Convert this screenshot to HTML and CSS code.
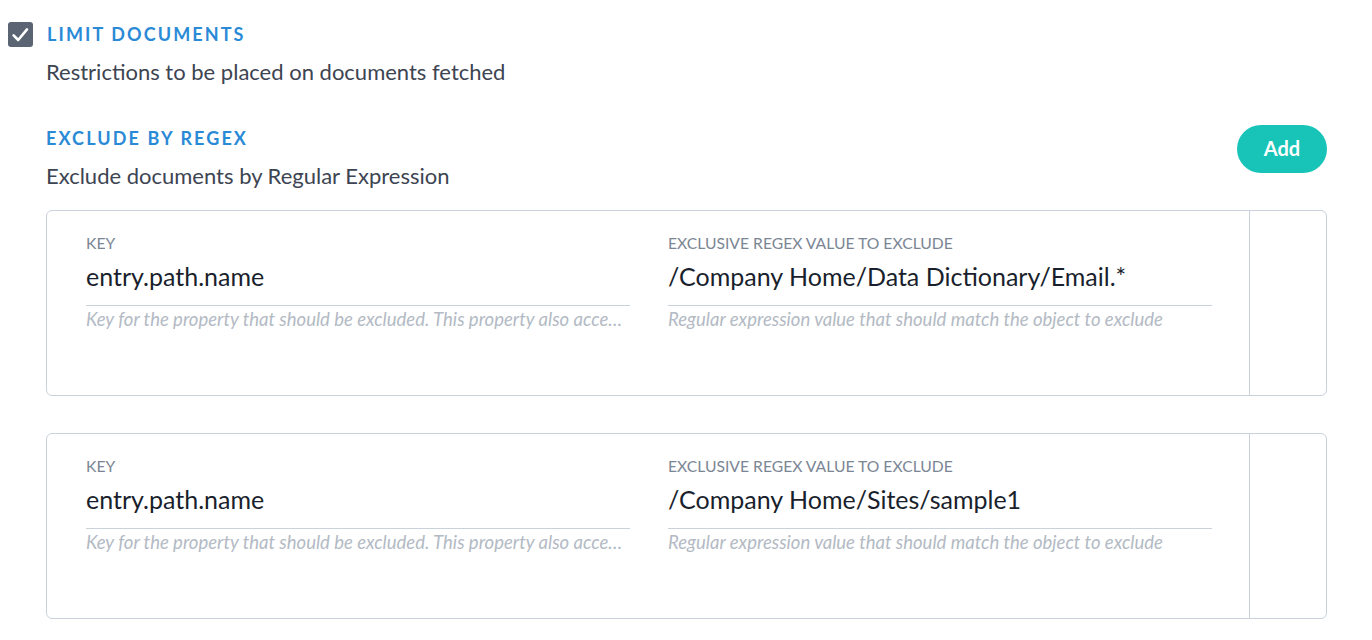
FILE: index.html
```html
<!DOCTYPE html>
<html>
<head>
<meta charset="utf-8">
<link rel="stylesheet" href="styles.css">
</head>
<body>
<div class="page">
  <div class="head">
    <span class="checkbox">
      <svg width="25" height="25" viewBox="0 0 25 25"><path d="M5.6 13.4 L10.2 18 L19 7.4" fill="none" stroke="#fff" stroke-width="2.6" stroke-linecap="round" stroke-linejoin="round"/></svg>
    </span>
    <span class="title">LIMIT DOCUMENTS</span>
  </div>
  <div class="content">
    <p class="desc">Restrictions to be placed on documents fetched</p>
    <div class="subhead">
      <div>
        <div class="title">EXCLUDE BY REGEX</div>
        <p class="desc">Exclude documents by Regular Expression</p>
      </div>
      <button class="add">Add</button>
    </div>
    <div class="card">
      <div class="fields">
        <div class="field">
          <div class="label">KEY</div>
          <div class="value">entry.path.name</div>
          <div class="help">Key for the property that should be excluded. This property also accepts nested properties</div>
        </div>
        <div class="field">
          <div class="label">EXCLUSIVE REGEX VALUE TO EXCLUDE</div>
          <div class="value">/Company Home/Data Dictionary/Email.*</div>
          <div class="help">Regular expression value that should match the object to exclude</div>
        </div>
      </div>
      <div class="side"></div>
    </div>
    <div class="card">
      <div class="fields">
        <div class="field">
          <div class="label">KEY</div>
          <div class="value">entry.path.name</div>
          <div class="help">Key for the property that should be excluded. This property also accepts nested properties</div>
        </div>
        <div class="field">
          <div class="label">EXCLUSIVE REGEX VALUE TO EXCLUDE</div>
          <div class="value">/Company Home/Sites/sample1</div>
          <div class="help">Regular expression value that should match the object to exclude</div>
        </div>
      </div>
      <div class="side"></div>
    </div>
  </div>
</div>
</body>
</html>
```
FILE: styles.css
```css
* { box-sizing: border-box; }
body {
  margin: 0;
  background: #fff;
  font-family: Lato, "Open Sans", sans-serif;
  color: #3d4452;
}
.page {
  padding: 22px 45px 0 8px;
}
.head {
  display: flex;
  align-items: center;
  gap: 14px;
  height: 25px;
}
.checkbox {
  width: 25px;
  height: 25px;
  border-radius: 3px;
  background: #5a6472;
  display: block;
}
.checkbox svg { display: block; }
.title {
  font-size: 18px;
  font-weight: 700;
  letter-spacing: 2.1px;
  color: #2a8ad6;
  line-height: 25px;
}
.content {
  padding-left: 38px;
}
.desc {
  margin: 0;
  font-size: 22px;
  line-height: 28px;
  color: #3d4452;
}
.content > .desc {
  margin-top: 11px;
}
.subhead {
  display: flex;
  justify-content: space-between;
  align-items: flex-start;
  margin-top: 40px;
  margin-bottom: 20px;
}
.subhead .desc { margin-top: 11px; }
.add {
  margin-top: -1px;
  width: 90px;
  height: 48px;
  border: none;
  border-radius: 24px;
  background: #17c4b7;
  color: #fff;
  font-family: Lato, sans-serif;
  font-size: 20px;
  font-weight: 700;
  padding: 0 0 3px;
}
.card {
  display: flex;
  border: 1px solid #c9d1db;
  border-radius: 6px;
  height: 186px;
  margin-bottom: 37px;
}
.fields {
  flex: 1;
  display: grid;
  grid-template-columns: 544px 544px;
  column-gap: 38px;
  padding: 23px 0 0 39px;
}
.side {
  width: 77px;
  border-left: 1px solid #c9d1db;
}
.field { min-width: 0; }
.label {
  font-size: 15.7px;
  line-height: 18px;
  color: #7b8694;
}
.value {
  margin-top: 8px;
  font-size: 25px;
  line-height: 32px;
  color: #1a1f2d;
  padding-bottom: 13px;
  border-bottom: 1px solid #c9d1db;
  white-space: nowrap;
}
.help {
  margin-top: 2px;
  font-size: 18.5px;
  line-height: 22px;
  font-style: italic;
  color: #b3bac4;
  white-space: nowrap;
  overflow: hidden;
  text-overflow: ellipsis;
}
```
